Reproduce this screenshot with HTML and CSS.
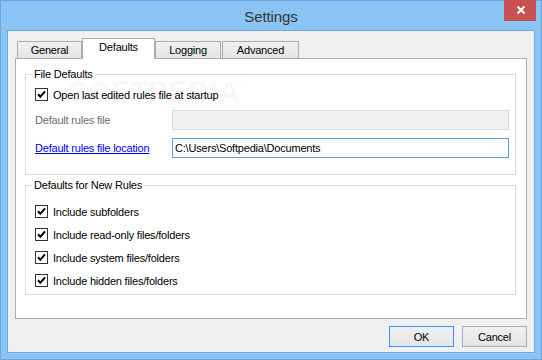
FILE: index.html
```html
<!DOCTYPE html>
<html>
<head>
<meta charset="utf-8">
<link rel="stylesheet" href="styles.css">
</head>
<body>
<div class="window">
  <div class="titlebar">Settings</div>
  <button class="close" aria-label="Close">
    <svg width="10" height="10" viewBox="0 0 10 10"><path d="M1.5 1.5 L8.5 8.5 M8.5 1.5 L1.5 8.5" stroke="#fff" stroke-width="2" fill="none"/></svg>
  </button>
  <div class="client">
    <div class="tabs">
      <div class="tab t-general">General</div>
      <div class="tab active t-defaults">Defaults</div>
      <div class="tab t-logging">Logging</div>
      <div class="tab t-advanced">Advanced</div>
    </div>
    <div class="panel">
      <div class="watermark">SOFTPEDIA<span class="reg">®</span></div>
      <fieldset class="group g1">
        <legend>File Defaults</legend>
        <div class="row check-row first">
          <svg class="cb" width="13" height="13" viewBox="0 0 13 13"><rect x="0.5" y="0.5" width="12" height="12" fill="#fff" stroke="#333"/><path d="M3 6.3 L5.3 8.8 L10 3.3" fill="none" stroke="#000" stroke-width="2"/></svg>
          <span>Open last edited rules file at startup</span>
        </div>
        <div class="row field-row r2">
          <span class="lbl disabled">Default rules file</span>
          <div class="input dis"></div>
        </div>
        <div class="row field-row r3">
          <a class="lbl link" href="#">Default rules file location</a>
          <div class="input focus">C:\Users\Softpedia\Documents</div>
        </div>
      </fieldset>
      <fieldset class="group g2">
        <legend>Defaults for New Rules</legend>
        <div class="row check-row2">
          <svg class="cb" width="13" height="13" viewBox="0 0 13 13"><rect x="0.5" y="0.5" width="12" height="12" fill="#fff" stroke="#333"/><path d="M3 6.3 L5.3 8.8 L10 3.3" fill="none" stroke="#000" stroke-width="2"/></svg>
          <span>Include subfolders</span>
        </div>
        <div class="row check-row2">
          <svg class="cb" width="13" height="13" viewBox="0 0 13 13"><rect x="0.5" y="0.5" width="12" height="12" fill="#fff" stroke="#333"/><path d="M3 6.3 L5.3 8.8 L10 3.3" fill="none" stroke="#000" stroke-width="2"/></svg>
          <span>Include read-only files/folders</span>
        </div>
        <div class="row check-row2">
          <svg class="cb" width="13" height="13" viewBox="0 0 13 13"><rect x="0.5" y="0.5" width="12" height="12" fill="#fff" stroke="#333"/><path d="M3 6.3 L5.3 8.8 L10 3.3" fill="none" stroke="#000" stroke-width="2"/></svg>
          <span>Include system files/folders</span>
        </div>
        <div class="row check-row2">
          <svg class="cb" width="13" height="13" viewBox="0 0 13 13"><rect x="0.5" y="0.5" width="12" height="12" fill="#fff" stroke="#333"/><path d="M3 6.3 L5.3 8.8 L10 3.3" fill="none" stroke="#000" stroke-width="2"/></svg>
          <span>Include hidden files/folders</span>
        </div>
      </fieldset>
    </div>
    <div class="buttons">
      <button class="btn default">OK</button>
      <button class="btn">Cancel</button>
    </div>
  </div>
</div>
</body>
</html>
```

FILE: styles.css
```css
html, body {
  margin: 0;
  padding: 0;
}
body {
  font-family: "Liberation Sans", Arial, sans-serif;
  font-size: 11px;
  letter-spacing: -0.2px;
  color: #000;
  background: #fff;
}
.window {
  position: relative;
  width: 542px;
  height: 360px;
  box-sizing: border-box;
  background: #8AC4F4;
  border: 1px solid #6FA4D6;
  padding: 0 6px 6px;
  display: flex;
  flex-direction: column;
}
.titlebar {
  height: 29px;
  line-height: 31px;
  text-align: center;
  font-size: 15px;
  letter-spacing: -0.1px;
  color: #333;
}
.close {
  position: absolute;
  top: -1px;
  right: 5px;
  width: 32px;
  height: 21px;
  background: #C75050;
  border: 0;
  padding: 0 0 1px 1px;
  display: flex;
  align-items: center;
  justify-content: center;
}
.client {
  flex: 1;
  background: #F0F0F0;
  border: 1px solid #74A9DB;
  padding: 7px 7px 5px;
  display: flex;
  flex-direction: column;
}
.tabs {
  display: flex;
  align-items: flex-end;
  height: 20px;
  padding-left: 2px;
}
.tab {
  box-sizing: border-box;
  height: 17px;
  border: 1px solid #ACACAC;
  border-bottom: 0;
  background: linear-gradient(#F0F0F0, #E5E5E5);
  text-align: center;
  line-height: 16px;
}
.t-general { width: 65px; }
.t-defaults { width: 73px; }
.t-logging { width: 66px; margin-left: 0; }
.t-advanced { width: 77px; margin-left: 1px; }
.tab.active {
  height: 21px;
  background: #fff;
  margin-bottom: -1px;
  position: relative;
  z-index: 1;
  line-height: 17px;
}
.panel {
  height: 261px;
  box-sizing: border-box;
  border: 1px solid #ACACAC;
  background: #fff;
  padding: 9px 10px 0 9px;
  position: relative;
}
.watermark {
  position: absolute;
  left: 52px;
  top: 16px;
  font-size: 30px;
  font-weight: bold;
  letter-spacing: 0;
  color: rgba(0, 0, 0, 0.035);
  pointer-events: none;
}
.watermark .reg {
  font-size: 12px;
  vertical-align: top;
}
.group {
  margin: 0;
  min-width: 0;
  border: 1px solid #DCDCDC;
  padding: 0 6px 0 9px;
}
.group legend {
  padding: 0 2px;
  margin-left: -3px;
  height: 13px;
  line-height: 13px;
}
.g1 {
  padding-top: 3px;
  padding-bottom: 16px;
}
.g2 {
  margin-top: 4px;
  padding-top: 8px;
  padding-bottom: 2px;
}
.row {
  display: flex;
  align-items: center;
}
.cb {
  flex: none;
  margin-right: 5px;
}
.check-row { height: 21px; }
.check-row2 { height: 23px; }
.field-row { height: 20px; }
.r2 { margin-top: 5px; }
.r3 { margin-top: 8px; }
.lbl {
  width: 137px;
  flex: none;
}
.disabled { color: #6D6D6D; }
.link {
  color: #0000FF;
  text-decoration: underline;
}
.input {
  flex: 1;
  height: 20px;
  box-sizing: border-box;
  line-height: 18px;
  padding-left: 2px;
}
.input.dis {
  background: #F0F0F0;
  border: 1px solid #D9D9D9;
}
.input.focus {
  background: #fff;
  border: 1px solid #569DE5;
}
.buttons {
  display: flex;
  justify-content: flex-end;
  gap: 8px;
  margin-top: 7px;
}
.btn {
  width: 65px;
  height: 21px;
  box-sizing: border-box;
  border: 1px solid #ACACAC;
  background: linear-gradient(#F0F0F0, #E5E5E5);
  font-family: inherit;
  font-size: 11px;
  letter-spacing: -0.2px;
  color: #000;
  padding: 0;
}
.btn.default {
  border-color: #3399FF;
}
```
